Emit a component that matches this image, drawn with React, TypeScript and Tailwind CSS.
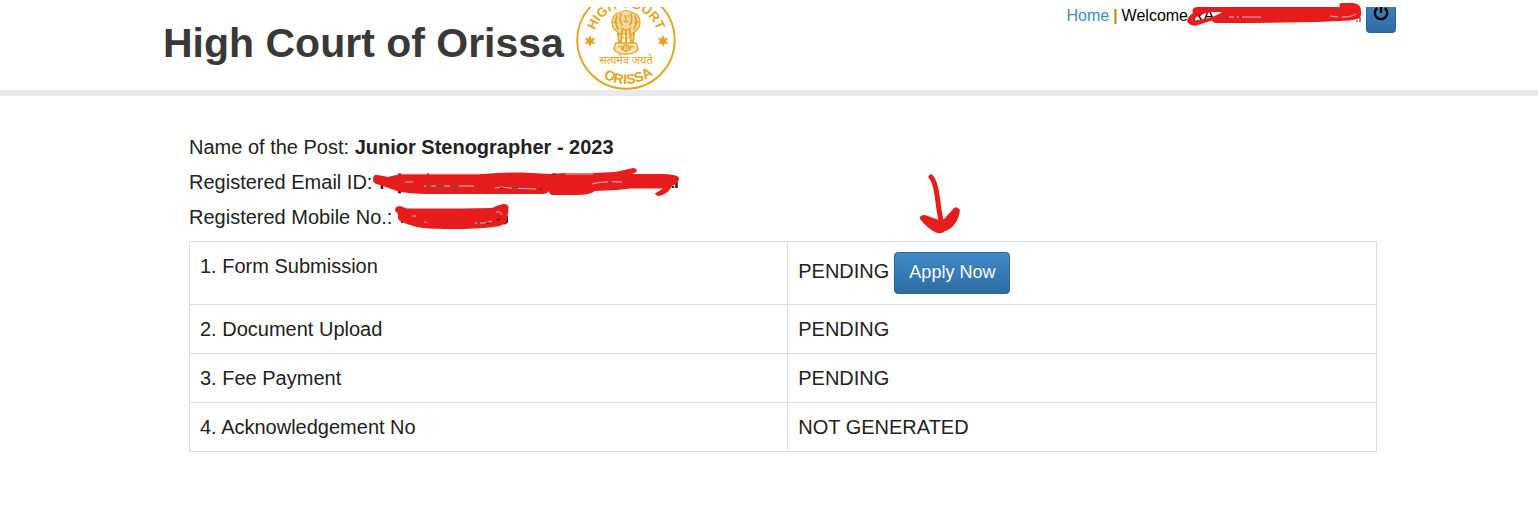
import React from "react";

const RED = "#e71d1d";
const GOLD = "#e2a522";

function Star({ x, y }: { x: number; y: number }) {
  return (
    <path
      transform={`translate(${x} ${y})`}
      d="M0-6 1.500-2.400 5.500-3 3 0 5.500 3 1.500 2.400 0 6-1.500 2.400-5.500 3-3 0-5.500-3-1.500-2.400Z"
      fill={GOLD}
    />
  );
}

function Seal() {
  return (
    <svg width="100" height="83" viewBox="0 16 100 83" className="shrink-0" role="img" aria-label="High Court of Orissa seal">
      <defs>
        <path id="arc-top" d="M17.500 49 A32.500 32.500 0 0 1 82.500 49" />
        <path id="arc-bottom" d="M7 50 A43 43 0 0 0 93 50" />
      </defs>
      <circle cx="50" cy="49" r="48.7" fill="#fff" stroke={GOLD} strokeWidth="2" />
      <g fill={GOLD} fontFamily="Liberation Sans, sans-serif" fontWeight="700">
        <text textAnchor="middle" fontSize="13">
          <textPath href="#arc-top" startOffset="50%">HIGH COURT</textPath>
        </text>
        <text textAnchor="middle" fontSize="14">
          <textPath href="#arc-bottom" startOffset="52%">ORISSA</textPath>
        </text>
      </g>
      <Star x={14} y={50} />
      <Star x={87} y={50} />
      <g stroke={GOLD} fill="none" strokeLinecap="round" strokeLinejoin="round">
        <path
          d="M45 21q5-3 10 0l5 2q4 3 4 8t-3 8l-5 4H44l-5-4q-3-3-3-8t4-8z"
          fill={GOLD}
          fillOpacity=".4"
          strokeWidth="1.2"
        />
        <path d="M45 23q-2 6 1 11M55 23q2 6-1 11M41 25q-3 6 1 13M59 25q3 6-1 13" strokeWidth="1.8" />
        <path d="M48 25h1M52 25h1M48 30q2 2 4 0M50 26v3M38 31l3 1M62 31l-3 1M45 37q5 4 10 0" strokeWidth="1.4" />
        <path d="M42 42l1 9M46 40l-1 11M50 40v11M54 40l1 11M58 42l-1 9" strokeWidth="1.9" />
        <path d="M44 44l4 3M56 44l-4 3" strokeWidth="1.3" />
        <path d="M40 52h20q3 5 1 8-4 3-11 3t-11-3q-2-3 1-8z" fill={GOLD} fillOpacity=".3" strokeWidth="1.4" />
        <circle cx="50" cy="57" r="3" fill="#fff" strokeWidth="1.5" />
        <path d="M50 55v4M48 57h4M42 56l3-1 1 4M58 56l-3-1-1 4" strokeWidth="1.2" />
      </g>
      <text x="50" y="73" textAnchor="middle" fill={GOLD} fontSize="11" fontFamily="Noto Sans, Noto Sans Devanagari, sans-serif">
        सत्यमेव जयते
      </text>
    </svg>
  );
}

function NameMark() {
  return (
    <svg className="pointer-events-none absolute -top-1 -left-1.5" width="176" height="24" viewBox="1186 3 176 24" aria-hidden="true">
      <path
        fill={RED}
        fillRule="evenodd"
        d="M1187 21Q1188 16 1193 13Q1191 8 1197 7H1340Q1338 3 1342 3Q1352 2 1357 4Q1361 6 1361 11Q1362 17 1358 19Q1350 21 1340 21L1317 22L1250 23H1217Q1213 23 1212 20.5L1198 25Q1190 27 1187 21ZM1192 21L1209 18Q1218 15 1222 12L1212 12Q1204 13 1198 16Z"
      />
      <path d="M1225 17h9M1237 17h24M1330 16l8 1M1342 17q10 0 14-3" stroke="#f6b5b5" fill="none" />
      <path d="M1225 17h4M1239 17h3M1357 20v2M1360 17v5" stroke="#111" fill="none" />
    </svg>
  );
}

function EmailMark() {
  return (
    <svg className="pointer-events-none absolute top-[3px] -left-1" width="307" height="30" viewBox="373 168 307 30" aria-hidden="true">
      <path d="M382 185v4M398 192h3M582 191q7 2 8-2M662 186v2M673 186v2M676.500 181v7" stroke="#222" strokeWidth="2.500" fill="none" />
      <path
        fill={RED}
        d="M373 180Q373 174 378 175L388 177L400 174H483Q505 172 523 172.500L550 174L565 173H593L615 172L631 168.500Q636 167 637 171Q636 173 632 174L660 174Q680 174 679 179Q678 184 672 186Q669 193 660 196Q656 196 655 193.500L663 188.500H630L617 190L595 191Q590 195 577 195H553Q549 195 549 191Q547 194 543 194H427Q409 194 397 191L380 185Q373 184 373 180Z"
      />
      <path d="M400 174h80M495 188q7-2 14 0l27 1M592 184q10-3 30-2M405 182h8M424 186h50M565 174h28" stroke="#f7b3b3" fill="none" />
      <path d="M426 186h5M436 186h8M450 186h9M500 188h3M512 188h6M541 188v2M608 182h4M398 174h3M427 174h2M552 174h4" stroke="#222" fill="none" />
    </svg>
  );
}

function MobileMark() {
  return (
    <svg className="pointer-events-none absolute top-[3px] -left-0.5" width="116" height="28" viewBox="395 203 116 28" aria-hidden="true">
      <path d="M402 217v6M505 216l2 1v5l-3 2" stroke="#222" strokeWidth="2" fill="none" />
      <path
        fill={RED}
        d="M395 211Q395 206 400 206L407 208.500H460L492 208Q498 205 503 204Q509 204 508.500 208L507 221Q505 226 493 227Q475 229 453 229Q435 229 423 228Q411 226 402 222Q397 220 398 216Q399 214 395 211Z"
      />
      <path d="M412 216h4M424 222h3M475 223q10 1 17-2M496 212q5-1 6 3" stroke="#f4a9a9" fill="none" />
      <path d="M477 223h3M486 223h3M497 220l3-1" stroke="#222" fill="none" />
    </svg>
  );
}

function Arrow() {
  return (
    <svg className="pointer-events-none absolute -top-[78px] left-6" width="44" height="62" viewBox="918 174 44 62" aria-hidden="true">
      <path d="M931 177Q935 181 937 195Q939 212 942 226" stroke={RED} strokeWidth="5" strokeLinecap="round" fill="none" />
      <path
        fill={RED}
        d="M920 219Q919 215 925 215L939 220L944 219L954 208Q957 206 960 210Q959 219 954 225Q950 230 945 231Q941 235 935 232Q927 228 920 219Z"
      />
    </svg>
  );
}

const rows = [
  { step: "1. Form Submission", status: "PENDING", action: true },
  { step: "2. Document Upload", status: "PENDING" },
  { step: "3. Fee Payment", status: "PENDING" },
  { step: "4. Acknowledgement No", status: "NOT GENERATED" },
];

export default function App() {
  return (
    <div className="min-h-screen bg-white pt-[7px] font-['Liberation_Sans',Arial,sans-serif] text-[#222]">
      <header className="border-b-6 border-[#e9e9e9] pl-7">
        <div className="mx-auto flex max-w-[1240px] items-start justify-between pr-[7px]">
          <div className="flex items-start gap-3">
            <h1 className="pt-3 text-[41px] leading-[48px] font-bold whitespace-nowrap text-[#393939]">High Court of Orissa</h1>
            <Seal />
          </div>
          <nav className="flex items-start gap-1 text-base leading-[18px] whitespace-nowrap text-black">
            <a href="#home" className="text-[#428bca]">Home</a>
            <span className="font-bold text-[#c58a1a]">|</span>
            <span>Welcome</span>
            <span className="relative w-[170px]">
              RA
              <NameMark />
            </span>
            <button
              type="button"
              aria-label="Log out"
              className="flex h-[26px] w-[30px] justify-center rounded-b border border-t-0 border-[#2b669a] bg-linear-to-b from-[#3c80bc] to-[#2d6ca2]"
            >
              <svg width="16" height="14" viewBox="0 0 16 14" fill="none" stroke="#000" strokeWidth="2.4" aria-hidden="true">
                <path d="M8 0v6M4.200 1A6.200 6.200 0 1 0 11.800 1" />
              </svg>
            </button>
          </nav>
        </div>
      </header>

      <main className="pt-[34px] pl-7">
        <div className="mx-auto max-w-[1240px] px-[26px] text-xl">
          <div className="leading-[35px]">
            <p>
              Name of the Post: <strong>Junior Stenographer - 2023</strong>
            </p>
            <p className="flex">
              <span className="pr-[5px]">Registered Email ID:</span>
              <span className="relative"><EmailMark /></span>
            </p>
            <p className="flex">
              <span className="pr-[5px]">Registered Mobile No.:</span>
              <span className="relative"><MobileMark /></span>
            </p>
          </div>

          <table className="mt-1.5 w-full table-fixed border-collapse leading-7">
            <tbody>
              {rows.map((row) => (
                <tr key={row.step}>
                  <th scope="row" className="w-[50.4%] border border-[#ddd] p-2.5 text-left align-top font-normal">
                    {row.step}
                  </th>
                  <td className="border border-[#ddd] p-2.5 align-top">
                    {row.action ? (
                      <div className="flex items-baseline gap-[5px]">
                        <span>{row.status}</span>
                        <div className="relative">
                          <button
                            type="button"
                            className="h-[42px] rounded border border-[#2b669a] bg-linear-to-b from-[#428bca] to-[#2d6ca2] px-3.5 pb-0.5 text-lg leading-6 text-white [text-shadow:0_-1px_0_rgba(0,0,0,0.2)]"
                          >
                            Apply Now
                          </button>
                          <Arrow />
                        </div>
                      </div>
                    ) : (
                      row.status
                    )}
                  </td>
                </tr>
              ))}
            </tbody>
          </table>
        </div>
      </main>
    </div>
  );
}
